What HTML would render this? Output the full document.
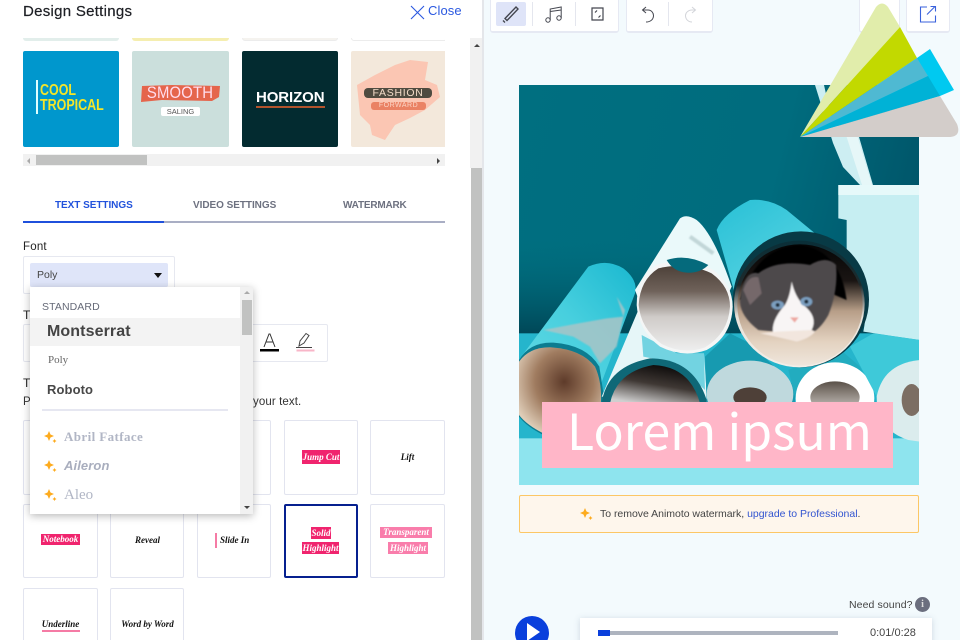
<!DOCTYPE html>
<html><head><meta charset="utf-8">
<style>
*{box-sizing:border-box}
html,body{margin:0;padding:0;width:960px;height:640px;overflow:hidden;background:#fff;font-family:"Liberation Sans",sans-serif}
.a{position:absolute;white-space:nowrap}
#stage{position:relative;width:960px;height:640px;overflow:hidden}
.card{position:absolute;background:#fff;border:1px solid #e2e4ef;border-radius:2px;width:75px;height:75px}
.c{position:absolute;font:italic bold 9px "Liberation Serif",serif;color:#111;white-space:nowrap;text-align:center}
.pk{background:#f0246e;color:#fff}
.tb{position:absolute;background:#fff;border:1px solid #e6e9f3;border-bottom-width:2px;border-radius:3px;top:-4px;height:37px}
</style></head><body><div id="stage">

<!-- right bg -->
<div class="a" style="left:482px;top:0;width:478px;height:640px;background:#f3fafd"></div>
<div class="a" style="left:470px;top:38px;width:12px;height:130px;background:#f1f1f1"></div>
<div class="a" style="left:471px;top:168px;width:11px;height:472px;background:#c1c2c1"></div>
<div class="a" style="left:482px;top:0;width:2px;height:640px;background:#e4e6ea"></div>
<div class="a" style="left:474px;top:44px;border-left:3px solid transparent;border-right:3px solid transparent;border-bottom:3px solid #444"></div>

<!-- header -->
<div class="a" style="left:23px;top:3px;font-size:15px;line-height:18px;color:#1d1f24;letter-spacing:.28px;-webkit-text-stroke:.2px #1d1f24">Design Settings</div>
<svg class="a" style="left:410px;top:5px" width="15" height="15" viewBox="0 0 15 15"><path d="M1 1L14 14M14 1L1 14" stroke="#2a58e0" stroke-width="1.1" fill="none"/></svg>
<div class="a" style="left:428px;top:3px;font-size:13px;line-height:16px;color:#2a58e0;letter-spacing:.1px">Close</div>

<!-- thumbnails -->
<div class="a" style="left:23px;top:38px;width:422px;height:129px;overflow:hidden">
  <div class="a" style="left:0;top:-20px;width:96px;height:23px;background:#e2eeeb;border-radius:3px"></div>
  <div class="a" style="left:109px;top:-20px;width:97px;height:23px;background:#f5eeb0;border-radius:3px"></div>
  <div class="a" style="left:219px;top:-20px;width:96px;height:23px;background:#f5f3ef;border:1px solid #ececec;border-radius:3px"></div>
  <div class="a" style="left:328px;top:-20px;width:96px;height:23px;background:#fff;border:1px solid #ececec;border-radius:3px"></div>

  <div class="a" style="left:0;top:13px;width:96px;height:96px;background:#0097cd;border-radius:2px">
    <div class="a" style="left:13px;top:29px;width:1.500px;height:34px;background:#dff"></div>
    <div class="a" style="left:17px;top:32px;font:bold 16px/15px 'Liberation Sans',sans-serif;color:#f3e52a;transform:scaleX(.78);transform-origin:0 0">COOL<br>TROPICAL</div>
  </div>
  <div class="a" style="left:109px;top:13px;width:97px;height:96px;background:#cbdfdc;border-radius:2px">
    <svg class="a" style="left:0;top:0" width="97" height="96"><path d="M10 35L40 34L88 35L87 46L80 50L30 49L9 51Z" fill="#e5654c"/></svg>
    <div class="a" style="left:9px;top:33px;width:78px;text-align:center;font-size:16.500px;line-height:18px;color:#fde;letter-spacing:.2px;transform:scaleX(.9)">SMOOTH</div>
    <div class="a" style="left:29px;top:56px;width:39px;height:9px;background:#fff;border-radius:2px;font-size:7.500px;line-height:9px;text-align:center;color:#555">SALING</div>
  </div>
  <div class="a" style="left:219px;top:13px;width:96px;height:96px;background:#032b30;border-radius:2px">
    <div class="a" style="left:14px;top:38px;width:68px;font:bold 15px/17px 'Liberation Sans',sans-serif;color:#fff;text-align:center;letter-spacing:-.1px">HORIZON</div>
    <div class="a" style="left:14px;top:55px;width:69px;height:2px;background:#b2532c"></div>
  </div>
  <div class="a" style="left:328px;top:13px;width:96px;height:96px;background:#f3e8db;border-radius:2px 0 0 2px">
    <svg class="a" style="left:0;top:0" width="96" height="96"><path d="M6 34L24 24L44 14L59 9L77 11L74 29L86 34L89 46L74 59L59 67L44 74L34 89L21 84L19 74L9 64Z" fill="#fbc6b3"/></svg>
    <div class="a" style="left:13px;top:37px;width:68px;height:10px;background:#4f4b40;border-radius:4px;font-size:10.500px;line-height:10px;text-align:center;color:#f3dcc8;letter-spacing:.7px">FASHION</div>
    <div class="a" style="left:20px;top:51px;width:55px;height:8px;background:#ea8264;border-radius:3px;font-size:7px;line-height:8px;text-align:center;color:#fbd5c6;letter-spacing:.5px">FORWARD</div>
  </div>
  <div class="a" style="left:0;top:116px;width:422px;height:12px;background:#f1f1f1"></div>
  <div class="a" style="left:13px;top:117px;width:111px;height:10px;background:#c1c2c1"></div>
  <div class="a" style="left:4px;top:120px;border-top:3px solid transparent;border-bottom:3px solid transparent;border-right:3px solid #aaa"></div>
  <div class="a" style="left:414px;top:120px;border-top:3px solid transparent;border-bottom:3px solid transparent;border-left:3px solid #444"></div>
</div>

<!-- tabs -->
<div class="a" style="left:55px;top:199px;font:bold 10px/13px 'Liberation Sans',sans-serif;color:#2152dc;letter-spacing:-.05px">TEXT SETTINGS</div>
<div class="a" style="left:193px;top:199px;font:bold 10px/13px 'Liberation Sans',sans-serif;color:#6d7180;letter-spacing:-.05px">VIDEO SETTINGS</div>
<div class="a" style="left:343px;top:199px;font:bold 10px/13px 'Liberation Sans',sans-serif;color:#6d7180;letter-spacing:-.2px">WATERMARK</div>
<div class="a" style="left:23px;top:221px;width:422px;height:1.500px;background:#a9aec4"></div>
<div class="a" style="left:23px;top:221px;width:141px;height:1.500px;background:#1f50dc"></div>

<!-- font -->
<div class="a" style="left:23px;top:240px;font-size:11.500px;line-height:14px;color:#222;letter-spacing:.2px">Font</div>
<div class="a" style="left:23px;top:256px;width:152px;height:38px;border:1px solid #e6e8f0;border-radius:2px"></div>
<div class="a" style="left:30px;top:263px;width:138px;height:24px;background:#dfe5f9;border-radius:2px"></div>
<div class="a" style="left:37px;top:268px;font-size:10.500px;line-height:14px;color:#444">Poly</div>
<div class="a" style="left:154px;top:273px;border-left:4px solid transparent;border-right:4px solid transparent;border-top:5px solid #111"></div>

<div class="a" style="left:23px;top:308px;font-size:12px;line-height:14px;color:#222">T</div>
<div class="a" style="left:23px;top:324px;width:305px;height:38px;border:1px solid #e6e8f0;border-radius:2px"></div>
<svg class="a" style="left:258px;top:332px" width="60" height="24" viewBox="0 0 60 24">
<path d="M6 15L11 2H12L17 15M8 10H15" stroke="#333" stroke-width="1" fill="none"/><rect x="2" y="17" width="19" height="2.500" fill="#000"/>
<path d="M41 14L42 9L48 1.500L51 3.500L46 11L41 14ZM38 15.500H54" stroke="#444" stroke-width="1" fill="none"/><rect x="38.500" y="17.500" width="18" height="2" fill="#f8b6c8"/>
</svg>
<div class="a" style="left:23px;top:376px;font-size:12px;line-height:14px;color:#222">T</div>
<div class="a" style="left:23px;top:395px;font-size:11.500px;line-height:14px;color:#333">P</div>
<div class="a" style="left:253px;top:395px;font-size:11.500px;line-height:14px;color:#333;letter-spacing:.1px">your text.</div>

<!-- grid -->
<div class="card" style="left:23px;top:420px"></div>
<div class="card" style="left:110px;top:420px;width:74px"></div>
<div class="card" style="left:197px;top:420px;width:74px"></div>
<div class="card" style="left:284px;top:420px;width:74px"></div>
<div class="card" style="left:370px;top:420px"></div>
<div class="card" style="left:23px;top:504px;height:74px"></div>
<div class="card" style="left:110px;top:504px;width:74px;height:74px"></div>
<div class="card" style="left:197px;top:504px;width:74px;height:74px"></div>
<div class="card" style="left:284px;top:504px;width:74px;height:74px;border:2px solid #06208f"></div>
<div class="card" style="left:370px;top:504px;height:74px"></div>
<div class="card" style="left:23px;top:588px;height:60px"></div>
<div class="card" style="left:110px;top:588px;width:74px;height:60px"></div>

<div class="c pk" style="left:302px;top:450px;width:38px;height:14px;line-height:14px">Jump Cut</div>
<div class="c" style="left:370px;top:450px;width:75px;line-height:14px">Lift</div>
<div class="c pk" style="left:41px;top:534px;width:39px;height:11px;line-height:11px">Notebook</div>
<div class="c" style="left:110px;top:534px;width:75px;line-height:12px">Reveal</div>
<div class="a" style="left:215px;top:533px;width:2px;height:15px;background:#f57ba5"></div>
<div class="c" style="left:220px;top:534px;line-height:12px">Slide In</div>
<div class="c pk" style="left:311px;top:527px;width:20px;height:12px;line-height:12px">Solid</div>
<div class="c pk" style="left:302px;top:542px;width:37px;height:12px;line-height:12px">Highlight</div>
<div class="c" style="left:380px;top:527px;width:52px;height:11px;line-height:11px;background:#f97dab;color:#fff">Transparent</div>
<div class="c" style="left:388px;top:542px;width:40px;height:12px;line-height:12px;background:#f97dab;color:#fff">Highlight</div>
<div class="c" style="left:23px;top:618px;width:75px;line-height:12px">Underline</div>
<div class="a" style="left:42px;top:630px;width:38px;height:1.500px;background:#f57ba5"></div>
<div class="c" style="left:110px;top:618px;width:75px;line-height:12px">Word by Word</div>

<!-- dropdown -->
<div class="a" style="left:30px;top:287px;width:223px;height:227px;background:#fff;box-shadow:0 2px 8px rgba(0,0,0,.28)">
  <div class="a" style="left:210px;top:0;width:13px;height:227px;background:#f1f1f1"></div>
  <div class="a" style="left:212px;top:13px;width:10px;height:35px;background:#c1c2c1"></div>
  <div class="a" style="left:214px;top:4px;border-left:3px solid transparent;border-right:3px solid transparent;border-bottom:3px solid #aaa"></div>
  <div class="a" style="left:214px;top:219px;border-left:3px solid transparent;border-right:3px solid transparent;border-top:3px solid #444"></div>
  <div class="a" style="left:12px;top:14px;font-size:10.500px;line-height:13px;color:#666a78;letter-spacing:.1px">STANDARD</div>
  <div class="a" style="left:0;top:31px;width:210px;height:28px;background:#f3f3f3"></div>
  <div class="a" style="left:17px;top:35px;font:bold 16px/20px 'Liberation Sans',sans-serif;color:#444;letter-spacing:.1px">Montserrat</div>
  <div class="a" style="left:18px;top:66px;font:11px/14px 'Liberation Serif',serif;color:#666">Poly</div>
  <div class="a" style="left:17px;top:94px;font:bold 13px/18px 'Liberation Sans',sans-serif;color:#484848;letter-spacing:.1px">Roboto</div>
  <div class="a" style="left:12px;top:122px;width:186px;height:1.500px;background:#e6e7f1"></div>
  <div class="a" style="left:34px;top:141px;font:bold 13px/18px 'Liberation Serif',serif;color:#b1b6c5;letter-spacing:.4px">Abril Fatface</div>
  <div class="a" style="left:34px;top:170px;font:italic bold 13px/18px 'Liberation Sans',sans-serif;color:#a9aebe;letter-spacing:.1px">Aileron</div>
  <div class="a" style="left:34px;top:199px;font:15px/18px 'Liberation Serif',serif;color:#b1b6c5">Aleo</div>
  <svg class="a" style="left:14px;top:144px" width="13" height="75" viewBox="0 0 13 75" fill="#fdab1e">
    <path d="M5 0L6.500 3.500L10 5L6.500 6.500L5 10L3.500 6.500L0 5L3.500 3.500ZM10.500 8L11.200 9.300L12.500 10L11.200 10.700L10.500 12L9.800 10.700L8.500 10L9.800 9.300Z"/>
    <path transform="translate(0,29)" d="M5 0L6.500 3.500L10 5L6.500 6.500L5 10L3.500 6.500L0 5L3.500 3.500ZM10.500 8L11.200 9.300L12.500 10L11.200 10.700L10.500 12L9.800 10.700L8.500 10L9.800 9.300Z"/>
    <path transform="translate(0,58)" d="M5 0L6.500 3.500L10 5L6.500 6.500L5 10L3.500 6.500L0 5L3.500 3.500ZM10.500 8L11.200 9.300L12.500 10L11.200 10.700L10.500 12L9.800 10.700L8.500 10L9.800 9.300Z"/>
  </svg>
</div>

<!-- toolbar -->
<div class="tb" style="left:490px;width:129px"></div>
<div class="tb" style="left:626px;width:87px"></div>
<div class="tb" style="left:859px;width:41px"></div>
<div class="tb" style="left:906px;width:44px"></div>
<div class="a" style="left:496px;top:2px;width:30px;height:24px;background:#dfe4f8;border-radius:2px"></div>
<div class="a" style="left:532px;top:2px;width:1px;height:24px;background:#e4e6ee"></div>
<div class="a" style="left:575px;top:2px;width:1px;height:24px;background:#e4e6ee"></div>
<div class="a" style="left:668px;top:2px;width:1px;height:24px;background:#e4e6ee"></div>
<svg class="a" style="left:490px;top:0" width="230" height="32" viewBox="0 0 230 32" fill="none" stroke="#44464f" stroke-width="1">
  <path d="M15 18.500L26 7L28 9L17 20.500ZM13 20.500L15 22.500" stroke-width="1.400"/>
  <circle cx="58" cy="20" r="2.200"/><circle cx="69" cy="18" r="2.200"/>
  <path d="M60.200 20V9L71.200 7V18M60.200 11.500L71.200 10"/>
  <path d="M102 8H113V20H102ZM105 12.500L107 10.500M110.500 15.500L108.500 17.500" stroke-width="1.200"/>
  <path d="M156 7L152.500 10L156 13M152.500 10H158C161.500 10 163.500 13 163.500 15.500C163.500 19 161 22 156 22" />
  <path d="M202 7L205.500 10L202 13M205.500 10H202C198 10 195.500 13 195.500 15.500C195.500 19 198 22 202 22" stroke="#d3d5da"/>
</svg>
<svg class="a" style="left:918px;top:4px" width="22" height="20" viewBox="0 0 22 20" fill="none" stroke="#3a62dc" stroke-width="1.100">
  <path d="M9 3H2.500V18H17.500V11.500M9 10.500L17 2.500M12.500 2.500H17.500V7.500"/>
</svg>

<!-- photo -->
<svg class="a" style="left:519px;top:85px" width="400" height="400" viewBox="519 85 400 400">
<defs>
<linearGradient id="bg" x1="0" y1="0" x2="1" y2=".25"><stop offset="0" stop-color="#006f80"/><stop offset=".65" stop-color="#006c7e"/><stop offset="1" stop-color="#00566a"/></linearGradient>
<linearGradient id="bg2" x1="0" y1="0" x2="0" y2="1"><stop offset="0" stop-color="#006879" stop-opacity="0"/><stop offset="1" stop-color="#004757"/></linearGradient>
<radialGradient id="tan" cx=".55" cy=".4" r=".65"><stop offset="0" stop-color="#5e3b2a"/><stop offset=".55" stop-color="#a07c60"/><stop offset="1" stop-color="#dfcdb8"/></radialGradient>
<linearGradient id="wh" x1="0" y1="0" x2="0" y2="1"><stop offset="0" stop-color="#4d4139"/><stop offset=".3" stop-color="#6f625a"/><stop offset=".6" stop-color="#cfcbc8"/><stop offset="1" stop-color="#eeeeee"/></linearGradient>
<linearGradient id="in" x1=".5" y1="0" x2=".5" y2="1"><stop offset="0" stop-color="#050505"/><stop offset=".3" stop-color="#1a1513"/><stop offset=".55" stop-color="#b79e88"/><stop offset=".8" stop-color="#e3d2c0"/><stop offset="1" stop-color="#efe6dc"/></linearGradient>
<linearGradient id="ring" x1=".5" y1="0" x2=".5" y2="1"><stop offset="0" stop-color="#0a2f38"/><stop offset=".35" stop-color="#1e2a2c"/><stop offset=".6" stop-color="#e8e2da"/><stop offset="1" stop-color="#f3efe9"/></linearGradient>
<linearGradient id="dk" x1=".7" y1="0" x2=".3" y2="1"><stop offset="0" stop-color="#090707"/><stop offset=".5" stop-color="#3f3834"/><stop offset="1" stop-color="#cfcfcf"/></linearGradient>
<linearGradient id="cy" x1="1" y1="0" x2="0" y2="1"><stop offset="0" stop-color="#1ab8d0"/><stop offset=".5" stop-color="#47cfde"/><stop offset="1" stop-color="#62d9e4"/></linearGradient>
<linearGradient id="cy2" x1="0" y1="0" x2="1" y2="1"><stop offset="0" stop-color="#28c0d6"/><stop offset="1" stop-color="#6fdde8"/></linearGradient>
<linearGradient id="hole" x1="0" y1="0" x2="0" y2="1"><stop offset="0" stop-color="#5a5048"/><stop offset="1" stop-color="#d7d3cd"/></linearGradient>
<filter id="b2" x="-20%" y="-20%" width="140%" height="140%"><feGaussianBlur stdDeviation="2.500"/></filter>
</defs>
<rect x="519" y="85" width="400" height="400" fill="url(#bg)"/>
<rect x="519" y="240" width="400" height="94" fill="url(#bg2)"/>
<!-- stick -->
<path d="M815 85H824L833 125L857 130L873 185H860L843 167L833 143Z" fill="#cdeef2"/>
<path d="M846 135L857 135L872 185L862 185Z" fill="#e6f7f8"/>

<g transform="translate(510 190) scale(.33333)">
<!-- table -->
<rect x="27" y="430" width="1200" height="330" fill="#25b5cc"/>
<rect x="27" y="745" width="1200" height="145" fill="#8ee4ee"/>
<!-- bucket -->
<path d="M985 -15H1230V450L1060 425Q1075 350 1060 270L1010 180V90L985 85Z" fill="#c6eef2"/>
<rect x="985" y="-15" width="245" height="30" fill="#e6f9fa"/>
<!-- roll A -->
<path d="M30 505L235 230Q290 205 340 235Q385 270 375 310L270 590L150 560Z" fill="url(#cy)"/>
<path d="M100 420L205 400L290 385L340 380L320 320L345 360L320 470L270 520L240 470L190 440Z" fill="#a9c5c7" opacity=".85" filter="url(#b2)"/>
<path d="M27 510Q60 455 130 458Q230 465 268 530L285 640L100 735Q50 710 27 680Z" fill="#0c7c90"/>
<path d="M27 515Q60 470 125 472Q215 478 255 530Q278 580 272 650L100 730Q50 705 27 675Z" fill="url(#tan)"/>
<!-- roll D -->
<path d="M275 620L385 360L420 440L500 490L582 490L592 640Z" fill="#e6f6f8"/>
<path d="M395 435L500 490L582 490L585 600L500 520L400 500Z" fill="#55cbdb" opacity=".8"/>
<path d="M275 640Q290 530 420 505Q550 505 590 630V640Z" fill="#0f6877"/>
<path d="M300 640Q320 545 430 525Q540 530 570 640Z" fill="url(#dk)"/>
<!-- roll B -->
<path d="M375 300L510 85Q530 70 560 90Q610 130 665 290L600 430L420 420Z" fill="#eaf9fa"/>
<path d="M540 140L610 190" stroke="#9ab4b6" stroke-width="12" opacity=".5" filter="url(#b2)"/>
<path d="M380 345Q380 260 440 225Q530 195 610 240Q668 285 668 350Q665 440 590 480Q520 505 450 470Q385 420 380 345Z" fill="#f4f6f6"/>
<path d="M386 345Q390 270 445 235Q530 215 605 250Q660 290 660 350Q655 430 585 472Q520 495 455 462Q392 415 386 345Z" fill="url(#wh)"/>
<path d="M470 210Q530 190 595 225Q570 250 530 248Q490 245 470 210Z" fill="#056a7c"/>
<!-- roll E -->
<path d="M585 500L660 430L720 460L855 590L855 640H590Z" fill="#179ab0"/>
<ellipse cx="720" cy="612" rx="130" ry="100" fill="#bfd9dd"/>
<ellipse cx="720" cy="622" rx="50" ry="30" fill="#4e4038"/>
<!-- roll F -->
<path d="M835 540L990 478L1050 530L1100 640H860Z" fill="#22acbf"/>
<ellipse cx="975" cy="625" rx="118" ry="108" fill="#fff"/>
<ellipse cx="975" cy="622" rx="74" ry="48" fill="url(#hole)"/>
<!-- roll G -->
<path d="M1020 470L1090 430L1230 450V515L1100 620Z" fill="#3ec9d9"/>
<path d="M1230 510Q1120 520 1100 620Q1100 720 1195 750L1230 755Z" fill="#dbeced"/>
<ellipse cx="1205" cy="630" rx="30" ry="48" fill="#7c6e63"/>
<!-- roll C -->
<path d="M620 120Q640 70 720 30Q780 25 830 60L1000 200L1075 320L680 330Z" fill="url(#cy2)"/>
<ellipse cx="873" cy="328" rx="204" ry="204" fill="#083a45"/>
<ellipse cx="868" cy="342" rx="196" ry="190" fill="url(#ring)"/>
<ellipse cx="870" cy="345" rx="188" ry="182" fill="url(#in)"/>
<path d="M690 330Q740 170 870 165Q990 180 1010 330L940 300L800 290Z" fill="#060505" filter="url(#b2)"/>
<!-- kitten -->
<g filter="url(#b2)">
<path d="M695 300Q710 240 745 250Q800 208 900 225Q950 195 978 225Q985 300 955 375Q930 420 895 435L745 420Q692 380 690 335Z" fill="#4d494b"/>
<path d="M700 300Q715 255 745 262L755 310L720 345Z" fill="#75676a"/>
<path d="M845 275Q855 320 880 345Q925 380 905 420Q860 460 790 435Q780 395 825 345Q840 320 845 275Z" fill="#f8f5f5"/>
<path d="M750 430Q800 440 860 455Q900 445 915 425L905 420L800 425Z" fill="#f2e6de"/>
<ellipse cx="803" cy="345" rx="19" ry="13" fill="#7b9fc0"/>
<ellipse cx="889" cy="335" rx="18" ry="14" fill="#7b9fc0"/>
<circle cx="803" cy="345" r="6" fill="#1c2a38"/>
<circle cx="889" cy="335" r="6" fill="#1c2a38"/>
<path d="M840 382L866 382L854 398Z" fill="#eda7a0"/>
</g>
</g>
<!-- caption -->
<rect x="542" y="402" width="351" height="66" fill="#ffb6c8"/>
<text x="567" y="450" font-family="'Noto Sans CJK SC','DejaVu Sans',sans-serif" font-size="50" fill="#fff" textLength="305" lengthAdjust="spacingAndGlyphs">Lorem ipsum</text>
</svg>

<!-- logo -->
<svg class="a" style="left:795px;top:0" width="165" height="142" viewBox="795 0 165 142">
<path d="M800 137L876 7Q882 0 888 7L900 27Z" fill="#e1edab"/>
<path d="M800 137L900 27L917 58Z" fill="#c2d900"/>
<path d="M800 137L917 58L930 49L954 90L940 96Z" fill="#00c9f0"/>
<path d="M800 137L917 58L928 76Z" fill="#4fb9d2"/>
<path d="M800 137L928 76L940 96Z" fill="#00b2d6"/>
<path d="M800 137L940 96L957 124Q962 137 948 137Z" fill="#d3cdca"/>
</svg>

<!-- banner -->
<div class="a" style="left:519px;top:495px;width:400px;height:38px;background:#fef6ec;border:1.500px solid #fcc766;border-radius:2px"></div>
<svg class="a" style="left:580px;top:508px" width="13" height="12" viewBox="0 0 13 12" fill="#fdab1e"><path d="M5 0L6.500 3.500L10 5L6.500 6.500L5 10L3.500 6.500L0 5L3.500 3.500ZM10.500 8L11.200 9.300L12.500 10L11.200 10.700L10.500 12L9.800 10.700L8.500 10L9.800 9.300Z"/></svg>
<div class="a" style="left:600px;top:507px;font-size:10.500px;line-height:14px;color:#444;letter-spacing:-.02px">To remove Animoto watermark, <span style="color:#3355d0">upgrade to Professional</span>.</div>

<!-- player -->
<div class="a" style="left:849px;top:598px;font-size:10.500px;line-height:14px;color:#444;letter-spacing:.1px">Need sound?</div>
<div class="a" style="left:915px;top:597px;width:15px;height:15px;border-radius:50%;background:#6b6e7e;color:#ddd;font:bold 10px/15px 'Liberation Serif',serif;text-align:center">i</div>
<div class="a" style="left:515px;top:616px;width:34px;height:34px;border-radius:50%;background:#0a3fdc"></div>
<div class="a" style="left:527px;top:623px;border-top:9px solid transparent;border-bottom:9px solid transparent;border-left:13px solid #fff"></div>
<div class="a" style="left:580px;top:618px;width:352px;height:30px;background:#fff;box-shadow:0 1px 6px rgba(90,110,140,.25)"></div>
<div class="a" style="left:598px;top:631px;width:240px;height:4px;background:#aeb4bf"></div>
<div class="a" style="left:598px;top:630px;width:12px;height:6px;background:#0a3fdc"></div>
<div class="a" style="left:870px;top:626px;font-size:11px;line-height:14px;color:#444">0:01/0:28</div>

</div></body></html>
